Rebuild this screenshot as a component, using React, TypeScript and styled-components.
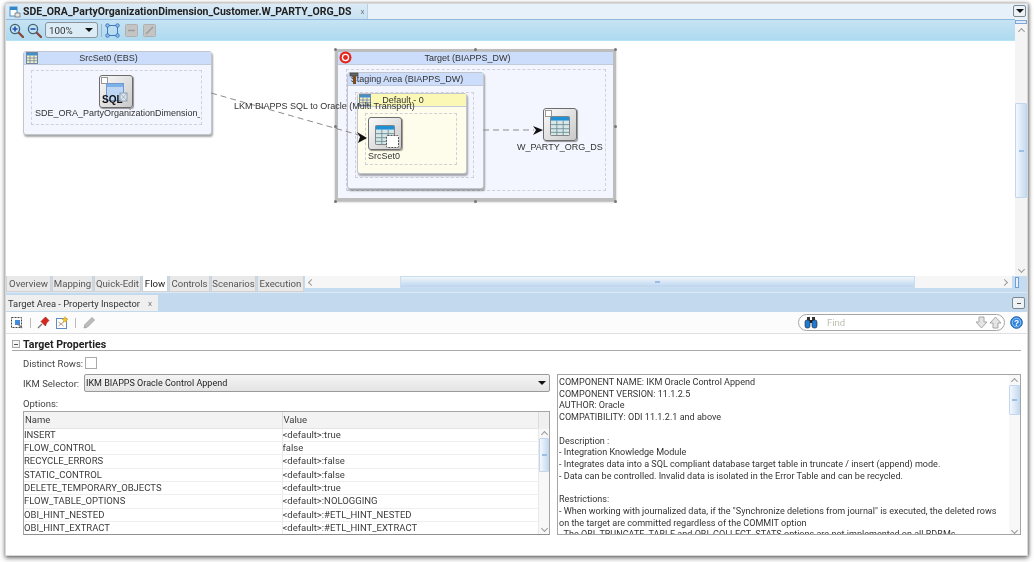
import React from "react";
import styled, { createGlobalStyle } from "styled-components";

const Global = createGlobalStyle`
  html, body { margin: 0; padding: 0; background: #fff; overflow: hidden; }
  #root { width: 1034px; height: 562px; }
  * { box-sizing: border-box; }
`;
const UI = `Roboto, "Noto Sans", sans-serif`;
const DIAGRAM = `"Liberation Sans", Arial, sans-serif`;

const Page = styled.div`
  width: 1034px; height: 562px; padding: 3px 6px 6px 5px; background: #fff;
  filter: blur(0.4px); font-family: ${UI}; color: #333;
`;
const Window = styled.div`
  width: 1023px; height: 553px; background: #fff; display: flex; flex-direction: column;
  border: 1px solid #d8d8d8; box-shadow: 0 2px 5px rgba(0,0,0,.55), 1px 0 3px rgba(0,0,0,.3);
`;
const TabStrip = styled.div`
  height: 15px; flex: none; display: flex; align-items: stretch; justify-content: space-between;
  background: #e6f1fa; padding-right: 1px;
`;
const EditorTab = styled.div`
  width: 362px; display: flex; align-items: center; gap: 2px; padding-left: 3px;
  background: linear-gradient(#dbeaf6, #c8e2f3); border-right: 1px solid #b9cfe0;
  font: 700 10.5px ${UI}; color: #222; white-space: nowrap;
`;
const CloseX = styled.span<{ $left?: number }>`
  font: 400 8px ${UI}; color: #777; margin-left: ${p => p.$left ?? 5}px;
`;
const PaneButton = styled.div<{ $mb?: number }>`
  width: 13px; height: 12px; margin-top: 1px; margin-bottom: ${p => p.$mb ?? 0}px;
  border: 1px solid #7d8790; border-radius: 2px; background: #edf2f7;
  display: flex; align-items: center; justify-content: center;
`;
const EditorBody = styled.div`
  height: 257px; flex: none; display: flex;
`;
const EditorMain = styled.div`
  flex: 1; min-width: 0; display: flex; flex-direction: column; border-top: 1px solid #8fb8dc;
`;
const EditorBar = styled.div`
  height: 21px; flex: none; display: flex; align-items: center; gap: 3px; padding-left: 3px;
  background: linear-gradient(#c6e3f3, #aedaf0); border-bottom: 1px solid #b7e3f7;
`;
const ZoomBox = styled.div`
  width: 53px; height: 16px; border: 1px solid #8b949c; border-radius: 3px; background: #dcecf6;
  font: 400 9.8px ${UI}; color: #333; display: flex; align-items: center; justify-content: space-between; padding: 0 4px 0 3px;
`;
const ToolGroup = styled.div`
  display: flex; align-items: center; gap: 5px;
`;
const Caret = styled.span`
  width: 0; height: 0; border-left: 4px solid transparent; border-right: 4px solid transparent; border-top: 4px solid #111;
`;
const Divider = styled.span`
  width: 1px; height: 13px; background: #9fb3c0;
`;
const Canvas = styled.div`
  position: relative; flex: 1; background: #fff; overflow: hidden;
`;
const VScroll = styled.div`
  width: 12px; flex: none; background: #f4f4f4; display: flex; flex-direction: column; align-items: center; position: relative;
`;
const GripTop = styled.div`
  width: 12px; height: 4px; flex: none; border: 1px solid #7fa6d3; background: #dceafa; margin-top: 1px;
`;
const Chevron = styled.span<{ $dir: "up" | "down" | "left" | "right"; $mt?: number }>`
  width: 5px; height: 5px; flex: none; display: block; border-left: 1px solid #9a9a9a; border-top: 1px solid #9a9a9a;
  margin-top: ${p => p.$mt ?? 0}px;
  transform: rotate(${p => ({ up: 45, right: 135, down: 225, left: 315 }[p.$dir])}deg);
`;
const ThumbV = styled.div<{ $h: number; $mt: number }>`
  width: 100%; height: ${p => p.$h}px; margin-top: ${p => p.$mt}px; flex: none;
  background: linear-gradient(90deg, #f4f8fd, #c6dbf2); border: 1px solid #c2d6ec; border-radius: 1px;
  display: flex; align-items: center; justify-content: center;
`;
const Grip = styled.span`
  width: 5px; height: 2px; background: #9dbde8;
`;
const EditorTabs = styled.div`
  height: 16px; flex: none; display: flex; align-items: stretch; background: #c5dbef;
`;
const SheetTab = styled.div<{ $w: number; $active?: boolean }>`
  width: ${p => p.$w}px; margin-right: 1px; flex: none; display: flex; align-items: center; justify-content: center;
  background: ${p => p.$active ? "#fff" : "#e9e9e9"}; border: 1px solid #d2d2d2; border-top: 0;
  font: 400 9.6px ${UI}; color: ${p => p.$active ? "#222" : "#555"};
`;
const HTrack = styled.div`
  flex: 1; display: flex; align-items: center; background: #f6f6f6; height: 12px; padding-left: 4px; margin-right: 3px;
`;
const ThumbH = styled.div`
  width: 515px; height: 12px; margin-left: 86px; flex: none;
  background: linear-gradient(#f0f6fc, #bcd5ee); border: 1px solid #c9dcf0;
  display: flex; align-items: center; justify-content: center;
`;
const HEnd = styled.div`
  flex: 1; display: flex; justify-content: flex-end; align-items: center; padding-right: 5px;
`;
const SplitMark = styled.div`
  width: 4px; height: 11px; margin: 1px 8px 0 0; border: 1px solid #6f9fd8; background: #e9f2fc; flex: none;
`;

const InspectorHead = styled.div`
  height: 20px; flex: none; display: flex; align-items: flex-end; justify-content: space-between;
  background: #c3d9ed; border-top: 1px solid #dce8f3; padding-right: 2px;
`;
const InspectorTab = styled.div`
  width: 152px; height: 16px; margin-bottom: 1px; display: flex; align-items: center; padding-left: 2px; background: #efefef;
  font: 400 9.35px ${UI}; color: #333; white-space: nowrap;
`;
const InspectorBar = styled.div`
  height: 22px; flex: none; display: flex; align-items: center; padding: 0 4px 0 4px; gap: 5px; border-bottom: 1px solid #e0e0e0; background: #fcfcfc;
`;
const BarSep = styled.span`
  width: 1px; height: 10px; background: #bbb; margin: 0 1px;
`;
const FindBox = styled.div`
  margin-left: auto; width: 207px; height: 17px; border: 1px solid #a5a5a5; border-radius: 9px; background: #fff;
  display: flex; align-items: center; padding: 0 2px 0 5px; gap: 1px;
  font: 400 9.5px ${UI}; color: #bdbdb0;
`;
const FindLabel = styled.span`
  flex: 1; padding-left: 8px;
`;
const Content = styled.div`
  flex: 1; min-height: 0; padding: 3px 6px 0 6px; display: flex; flex-direction: column; overflow: hidden;
`;
const SectionHead = styled.div`
  height: 14px; flex: none; display: flex; align-items: center; gap: 3px; padding-top: 1px; border-bottom: 1px solid #a9a9a9;
  font: 700 10.6px ${UI}; color: #222;
`;
const Collapse = styled.span`
  width: 8px; height: 8px; border: 1px solid #a8a8a8; display: flex; align-items: center; justify-content: center; background: #f5f5f5;
`;
const Dash = styled.span`
  width: 4px; height: 1px; background: #555;
`;
const Columns = styled.div`
  flex: 1; display: grid; grid-template-columns: 538px 1fr; column-gap: 7px; min-height: 0; padding-top: 6px;
`;
const Left = styled.div`
  display: flex; flex-direction: column; padding-left: 11px; min-width: 0;
`;
const FieldRow = styled.div<{ $mt?: number }>`
  display: flex; align-items: center; flex: none; font: 400 9.5px ${UI}; color: #444;
  margin-top: ${p => p.$mt ?? 0}px;
`;
const OptionsLabel = styled.div`
  height: 19px; flex: none; padding-top: 6px; font: 400 9.5px/12px ${UI}; color: #444;
`;
const FieldLabel = styled.label<{ $w: number }>`
  width: ${p => p.$w}px; flex: none;
`;
const Check = styled.span`
  width: 12px; height: 12px; border: 1px solid #aaa; background: #fff; display: block;
`;
const Select = styled.div`
  flex: 1; height: 18px; border: 1px solid #9a9a9a; border-radius: 2px; background: linear-gradient(#f4f4f4, #e4e4e4);
  display: flex; align-items: center; justify-content: space-between; padding: 0 3px 0 1px; color: #222; font-size: 9px;
`;
const Grid = styled.div`
  height: 124px; flex: none; border: 1px solid #a5a5a5; border-bottom-color: #8f8f8f; display: grid; grid-template-columns: 1fr 10px; background: #fff; overflow: hidden;
`;
const Table = styled.table`
  border-collapse: collapse; table-layout: fixed; width: 100%; font: 400 9.5px ${UI}; color: #3c3c3c;
`;
const Th = styled.th<{ $w?: number }>`
  ${p => p.$w ? `width:${p.$w}px;` : ""} height: 16px; padding: 0 0 0 1px; text-align: left; font-weight: 400;
  background: #f3f3f3; border-right: 1px solid #dcdcdc; border-bottom: 1px solid #e5e5e5;
`;
const Td = styled.td`
  height: 13.37px; padding: 0; border-bottom: 1px solid #efefef; border-right: 1px solid #e9e9e9; white-space: nowrap; overflow: hidden; line-height: 12px;
`;
const SmallScroll = styled.div`
  display: flex; flex-direction: column; align-items: center; background: #f8f8f8;
`;
const ScrollCap = styled.div`
  height: 17px; width: 100%; flex: none; background: #f0f0f0; margin-bottom: 3px;
`;
const Info = styled.div`
  height: 161px; margin-top: 17px; border: 1px solid #a5a5a5; display: grid; grid-template-columns: 1fr 11px; overflow: hidden; background: #fff;
`;
const InfoText = styled.pre`
  margin: 0; padding: 2px 0 0 1px; font: 400 9.05px/11.72px ${UI}; color: #333; white-space: pre; overflow: hidden;
`;

const Group = styled.div<{ $x: number; $y: number; $w: number; $h: number; $yellow?: boolean }>`
  position: absolute; left: ${p => p.$x}px; top: ${p => p.$y}px; width: ${p => p.$w}px; height: ${p => p.$h}px;
  background: ${p => p.$yellow ? "#fefcea" : "#f3f6fe"}; border: 1px solid #c2c6cc; border-radius: 3px;
  box-shadow: 1px 2px 2px rgba(0,0,0,.35);
`;
const TargetFrame = styled(Group)`
  border: 3px solid #bdbdbd; border-radius: 1px; box-shadow: 0 1px 2px rgba(0,0,0,.3);
`;
const GroupHead = styled.div<{ $yellow?: boolean; $pr: number }>`
  height: 13px; background: ${p => p.$yellow ? "#fbf7b5" : "#ccdcfb"}; border-bottom: 1px solid #c2cbdc; text-align: center;
  padding-right: ${p => p.$pr}px; font: 400 9px/12px ${DIAGRAM}; color: #333; white-space: nowrap;
`;
const DashedArea = styled.div<{ $x: number; $y: number; $w: number; $h: number }>`
  position: absolute; left: ${p => p.$x}px; top: ${p => p.$y}px; width: ${p => p.$w}px; height: ${p => p.$h}px;
  border: 1px dashed #d0d0d8;
`;
const Tile = styled.div<{ $x: number; $y: number }>`
  position: absolute; left: ${p => p.$x}px; top: ${p => p.$y}px; width: 34px; height: 33px;
  border: 1px solid #6c6c6c; border-radius: 3px; background: linear-gradient(135deg, #fafafa, #c9c9c9);
  box-shadow: 1px 1px 1px rgba(0,0,0,.4);
`;
const Caption = styled.div<{ $x: number; $y: number; $w?: number }>`
  position: absolute; left: ${p => p.$x}px; top: ${p => p.$y}px; ${p => p.$w ? `width:${p.$w}px; overflow:hidden;` : ""}
  font: 400 9px/12px ${DIAGRAM}; color: #333; white-space: nowrap;
`;
const SqlMark = styled.span`
  position: absolute; left: 2px; bottom: 2px; font: 700 10px/11px ${DIAGRAM}; color: #111;
`;
const PlusBox = styled.span`
  position: absolute; left: 1px; top: 1px; width: 7px; height: 7px; border: 1px solid #999; background: #fff;
`;
const Wires = styled.svg`
  position: absolute; left: 0; top: 0; pointer-events: none;
`;
const Handle = styled.span<{ $x: number; $y: number }>`
  position: absolute; left: ${p => p.$x}px; top: ${p => p.$y}px; width: 3px; height: 3px; border-radius: 50%; background: #777;
`;
const HeadIcon = styled.span<{ $x: number; $y: number }>`
  position: absolute; left: ${p => p.$x}px; top: ${p => p.$y}px; display: block; line-height: 0;
`;

const TableGlyph = ({ s = 22 }: { s?: number }) => (
  <svg width={s} height={s} viewBox="0 0 22 22">
    <rect x=".5" y=".5" width="21" height="21" rx="1" fill="#d7e6e8" stroke="#777" />
    <rect x="1" y="1" width="20" height="4" fill="#1f8fd6" />
    <path d="M1 9.500h20M1 14h20M1 18h20M7.500 5v16M14.500 5v16" stroke="#6f8f95" strokeWidth="1" />
  </svg>
);
const SmallTable = () => (
  <svg width="12" height="12" viewBox="0 0 12 12">
    <rect x=".5" y=".5" width="11" height="11" fill="#f6efc0" stroke="#6d87a5" />
    <rect x="1" y="1" width="10" height="2.500" fill="#3f8fcf" />
    <path d="M1 6h10M1 8.700h10M4 3.500V11M8 3.500V11" stroke="#6d87a5" strokeWidth=".8" />
  </svg>
);
const Magnifier = ({ minus }: { minus?: boolean }) => (
  <svg width="15" height="15" viewBox="0 0 15 15">
    <path d="M9 9l5 5" stroke="#8a4a3a" strokeWidth="2.400" strokeLinecap="round" />
    <circle cx="6" cy="6" r="4.600" fill="#bfe0f5" stroke="#46616f" strokeWidth="1.300" />
    <path d={minus ? "M3.500 6h5" : "M3.500 6h5M6 3.500v5"} stroke="#1d55b0" strokeWidth="1.600" />
  </svg>
);
const FitIcon = () => (
  <svg width="15" height="15" viewBox="0 0 15 15" fill="none">
    <rect x="2.500" y="2.500" width="10" height="10" stroke="#3f77c4" strokeWidth="1" />
    {[[2.500, 2.500], [12.500, 2.500], [2.500, 12.500], [12.500, 12.500]].map(([x, y]) => (
      <circle key={`${x}${y}`} cx={x} cy={y} r="1.800" fill="#8dbbe8" stroke="#2b62b4" strokeWidth=".7" />
    ))}
  </svg>
);
const GreyTool = ({ line }: { line?: boolean }) => (
  <svg width="13" height="13" viewBox="0 0 13 13">
    <rect x=".5" y=".5" width="12" height="12" rx="1" fill="#c4c4c4" stroke="#b0b0b0" />
    <path d={line ? "M3 10l7-7" : "M3 6.500h7"} stroke="#9b9b9b" strokeWidth="1.400" />
  </svg>
);
const SelectIcon = () => (
  <svg width="14" height="14" viewBox="0 0 14 14" fill="none">
    <rect x="1.500" y="1.500" width="10" height="10" stroke="#444" strokeDasharray="2 1" />
    <rect x="5" y="4" width="5" height="5" fill="#3f8bdc" />
    <path d="M8 8l4 4" stroke="#777" strokeWidth="1.400" />
  </svg>
);
const PinIcon = () => (
  <svg width="13" height="13" viewBox="0 0 13 13">
    <path d="M1 12l4-4" stroke="#777" strokeWidth="1.200" />
    <path d="M4 5.500l4.500 4.500 1-3 2.500-2.500L8.500 1 6 3.500z" fill="#d8261c" stroke="#8e1410" strokeWidth=".6" />
  </svg>
);
const NoteIcon = () => (
  <svg width="14" height="14" viewBox="0 0 14 14">
    <rect x="1.500" y="2.500" width="10" height="10" fill="#fff" stroke="#5d8cc4" />
    <path d="M3.500 6l5 4M8.500 6l-5 4" stroke="#b98" strokeWidth="1" />
    <path d="M10 .5l1 2 2 .5-1.500 1.500.3 2-1.800-1-1.800 1 .3-2L7 3l2-.5z" fill="#f4c430" stroke="#b98a10" strokeWidth=".4" />
  </svg>
);
const PencilIcon = () => (
  <svg width="14" height="14" viewBox="0 0 14 14">
    <path d="M2 12l1-3.500 7-7 2.500 2.500-7 7z" fill="#bcbcbc" stroke="#9a9a9a" strokeWidth=".8" />
  </svg>
);
const Binoculars = () => (
  <svg width="14" height="13" viewBox="0 0 14 13">
    <rect x="3" y="1" width="3" height="4" fill="#333" /><rect x="8" y="1" width="3" height="4" fill="#333" />
    <rect x="5.500" y="4" width="3" height="3" fill="#222" />
    <rect x="1" y="4" width="5" height="8" rx="2" fill="#1f7ad6" stroke="#222" strokeWidth=".6" />
    <rect x="8" y="4" width="5" height="8" rx="2" fill="#1f7ad6" stroke="#222" strokeWidth=".6" />
  </svg>
);
const ArrowGlyph = styled.svg<{ $down?: boolean }>`
  transform: rotate(${p => p.$down ? 180 : 0}deg);
`;
const BigArrow = ({ down }: { down?: boolean }) => (
  <ArrowGlyph $down={down} width="13" height="13" viewBox="0 0 13 13">
    <path d="M6.500 1L12 7H9v5H4V7H1z" fill="#e4e4e4" stroke="#a8a8a8" />
  </ArrowGlyph>
);
const HelpIcon = () => (
  <svg width="13" height="13" viewBox="0 0 13 13">
    <circle cx="6.500" cy="6.500" r="5.800" fill="#2f86df" stroke="#1b5fa8" />
    <circle cx="6.500" cy="6.500" r="4.300" fill="none" stroke="#a9d2f7" strokeWidth=".8" />
    <text x="6.500" y="9.500" textAnchor="middle" fontSize="8.500" fontWeight="700" fill="#fff" fontFamily="Liberation Sans">?</text>
  </svg>
);
const TabIcon = () => (
  <svg width="12" height="12" viewBox="0 0 12 12">
    <rect x="1" y="1" width="7" height="9" fill="#fff" stroke="#4a90c8" />
    <rect x="1" y="1" width="7" height="3" fill="#2f86c9" />
    <path d="M6 7h5v4H6z" fill="#e7e7e7" stroke="#666" strokeWidth=".7" />
  </svg>
);

const tabs = ["Overview", "Mapping", "Quick-Edit", "Flow", "Controls", "Scenarios", "Execution"];
const tabWidths = [45, 41, 47, 26, 41, 45, 47];
const options: [string, string][] = [
  ["INSERT", "<default>:true"],
  ["FLOW_CONTROL", "false"],
  ["RECYCLE_ERRORS", "<default>:false"],
  ["STATIC_CONTROL", "<default>:false"],
  ["DELETE_TEMPORARY_OBJECTS", "<default>:true"],
  ["FLOW_TABLE_OPTIONS", "<default>:NOLOGGING"],
  ["OBI_HINT_NESTED", "<default>:#ETL_HINT_NESTED"],
  ["OBI_HINT_EXTRACT", "<default>:#ETL_HINT_EXTRACT"],
];
const infoText = `COMPONENT NAME: IKM Oracle Control Append
COMPONENT VERSION: 11.1.2.5
AUTHOR: Oracle
COMPATIBILITY: ODI 11.1.2.1 and above

Description :
- Integration Knowledge Module
- Integrates data into a SQL compliant database target table in truncate / insert (append) mode.
- Data can be controlled. Invalid data is isolated in the Error Table and can be recycled.

Restrictions:
- When working with journalized data, if the "Synchronize deletions from journal" is executed, the deleted rows
on the target are committed regardless of the COMMIT option
- The OBI_TRUNCATE_TABLE and OBI_COLLECT_STATS options are not implemented on all RDBMs`;

export default function App() {
  return (
    <Page>
      <Global />
      <Window>
        <TabStrip>
          <EditorTab><TabIcon />SDE_ORA_PartyOrganizationDimension_Customer.W_PARTY_ORG_DS<CloseX $left={7}>x</CloseX></EditorTab>
          <PaneButton><Caret /></PaneButton>
        </TabStrip>
        <EditorBody>
          <EditorMain>
            <EditorBar>
              <Magnifier /><Magnifier minus />
              <ZoomBox>100%<Caret /></ZoomBox>
              <Divider />
              <ToolGroup><FitIcon /><GreyTool /><GreyTool line /></ToolGroup>
            </EditorBar>
            <Canvas>
              <Group $x={17} $y={10} $w={189} $h={84}>
                <GroupHead $pr={18}>SrcSet0 (EBS)</GroupHead>
                <DashedArea $x={7} $y={18} $w={171} $h={55} />
              </Group>
              <HeadIcon $x={20} $y={11}><SmallTable /></HeadIcon>
              <Tile $x={93} $y={34}>
                <PlusBox />
                <HeadIcon $x={6} $y={7}>
                  <svg width="23" height="22" viewBox="0 0 23 22">
                    <rect x=".5" y=".5" width="17" height="17" fill="#bcd6f3" stroke="#6f9ad0" />
                    <rect x="1" y="1" width="16" height="3" fill="#7fb0e6" />
                    <rect x="14" y="10" width="7" height="8" fill="#dfe6ee" stroke="#8ea0b5" />
                    <path d="M14 10l7 8M21 10l-7 8" stroke="#8ea0b5" strokeWidth=".7" />
                  </svg>
                </HeadIcon>
                <SqlMark>SQL</SqlMark>
              </Tile>
              <Caption $x={29} $y={66} $w={165}>SDE_ORA_PartyOrganizationDimension_Customer</Caption>

              <TargetFrame $x={329} $y={8} $w={281} $h={152}>
                <GroupHead $pr={16}>Target (BIAPPS_DW)</GroupHead>
                <DashedArea $x={8} $y={17} $w={260} $h={122} />
              </TargetFrame>
              <HeadIcon $x={333} $y={10}>
                <svg width="13" height="13" viewBox="0 0 13 13">
                  <circle cx="6.500" cy="6.500" r="6" fill="#e3291f" />
                  <circle cx="6.500" cy="6.500" r="3.700" fill="#fff" />
                  <circle cx="6.500" cy="6.500" r="2.400" fill="#e3291f" />
                </svg>
              </HeadIcon>
              {[[328, 7], [468, 7], [608, 7], [328, 84], [608, 84], [328, 159], [468, 159], [608, 159]].map(([x, y]) => (
                <Handle key={`${x}-${y}`} $x={x} $y={y} />
              ))}

              <Group $x={341} $y={31} $w={137} $h={117}>
                <GroupHead $pr={17}>Staging Area (BIAPPS_DW)</GroupHead>
                <DashedArea $x={7} $y={19} $w={119} $h={86} />
              </Group>
              <HeadIcon $x={343} $y={31}>
                <svg width="11" height="13" viewBox="0 0 11 13">
                  <rect x="1" y="1" width="8" height="3" fill="#666" stroke="#333" strokeWidth=".6" />
                  <rect x="4" y="4" width="3" height="8" fill="#7d4a1e" />
                </svg>
              </HeadIcon>
              <Group $x={351} $y={52} $w={110} $h={81} $yellow>
                <GroupHead $yellow $pr={18}>Default - 0</GroupHead>
                <DashedArea $x={7} $y={19} $w={92} $h={52} />
              </Group>
              <HeadIcon $x={353} $y={53}><SmallTable /></HeadIcon>
              <Tile $x={362} $y={76}>
                <HeadIcon $x={6} $y={7}><TableGlyph s={20} /></HeadIcon>
                <HeadIcon $x={17} $y={17}>
                  <svg width="13" height="13" viewBox="0 0 13 13"><rect x=".5" y=".5" width="12" height="12" rx="1" fill="#fff" stroke="#555" strokeDasharray="2 1" /></svg>
                </HeadIcon>
              </Tile>
              <Caption $x={362} $y={109}>SrcSet0</Caption>
              <Tile $x={537} $y={67}>
                <PlusBox />
                <HeadIcon $x={6} $y={7}><TableGlyph s={20} /></HeadIcon>
              </Tile>
              <Caption $x={511} $y={100}>W_PARTY_ORG_DS</Caption>

              <Wires width="1010" height="234" viewBox="0 0 1010 234">
                <path d="M205 52L353 94" stroke="#8c8c8c" strokeWidth="1" strokeDasharray="6 4" fill="none" />
                <path d="M477 89H528" stroke="#8c8c8c" strokeWidth="1" strokeDasharray="6 4" fill="none" />
                <path d="M351 91L361 97 352 102 354 96z" fill="#111" />
                <path d="M527 85L537 89 527 94 530 89z" fill="#111" />
              </Wires>
              <Caption $x={228} $y={59}>LKM BIAPPS SQL to Oracle (Multi Transport)</Caption>
            </Canvas>
          </EditorMain>
          <VScroll>
            <GripTop />
            <Chevron $dir="up" $mt={5} />
            <ThumbV $h={95} $mt={69}><Grip /></ThumbV>
            <Chevron $dir="down" $mt={69} />
          </VScroll>
        </EditorBody>
        <EditorTabs>
          {tabs.map((t, i) => <SheetTab key={t} $w={tabWidths[i]} $active={t === "Flow"}>{t}</SheetTab>)}
          <HTrack>
            <Chevron $dir="left" />
            <ThumbH><Grip /></ThumbH>
            <HEnd><Chevron $dir="right" /></HEnd>
          </HTrack>
          <SplitMark />
        </EditorTabs>
        <InspectorHead>
          <InspectorTab>Target Area - Property Inspector<CloseX $left={8}>x</CloseX></InspectorTab>
          <PaneButton $mb={3}><Dash /></PaneButton>
        </InspectorHead>
        <InspectorBar>
          <SelectIcon /><BarSep /><PinIcon /><NoteIcon /><BarSep /><PencilIcon />
          <FindBox>
            <Binoculars /><FindLabel>Find</FindLabel><BigArrow down /><BigArrow />
          </FindBox>
          <HelpIcon />
        </InspectorBar>
        <Content>
          <SectionHead><Collapse><Dash /></Collapse>Target Properties</SectionHead>
          <Columns>
            <Left>
              <FieldRow><FieldLabel $w={62}>Distinct Rows:</FieldLabel><Check /></FieldRow>
              <FieldRow $mt={5}>
                <FieldLabel $w={61}>IKM Selector:</FieldLabel>
                <Select>IKM BIAPPS Oracle Control Append<Caret /></Select>
              </FieldRow>
              <OptionsLabel>Options:</OptionsLabel>
              <Grid>
                <Table>
                  <thead><tr><Th $w={258}>Name</Th><Th>Value</Th></tr></thead>
                  <tbody>
                    {options.map(([n, v]) => <tr key={n}><Td>{n}</Td><Td>{v}</Td></tr>)}
                  </tbody>
                </Table>
                <SmallScroll>
                  <ScrollCap />
                  <Chevron $dir="up" />
                  <ThumbV $h={34} $mt={1}><Grip /></ThumbV>
                  <Chevron $dir="down" $mt={54} />
                </SmallScroll>
              </Grid>
            </Left>
            <Info>
              <InfoText>{infoText}</InfoText>
              <SmallScroll>
                <Chevron $dir="up" $mt={4} />
                <ThumbV $h={30} $mt={1}><Grip /></ThumbV>
                <Chevron $dir="down" $mt={113} />
              </SmallScroll>
            </Info>
          </Columns>
        </Content>
      </Window>
    </Page>
  );
}
